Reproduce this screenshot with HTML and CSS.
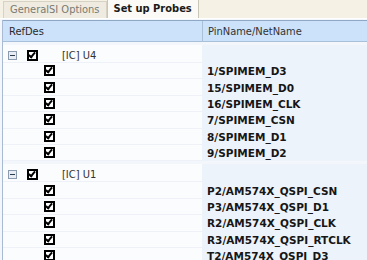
FILE: index.html
```html
<!DOCTYPE html>
<html lang="en">
<head>
  <meta charset="UTF-8">
  <title>Set up Probes</title>
  <link rel="stylesheet" href="styles.css">
</head>
<body>
  <div class="tabs">
    <div class="tab">GeneralSI Options</div>
    <div class="tab active">Set up Probes</div>
  </div>

  <div class="grid">
    <div class="head">
      <div class="cell tree">RefDes</div>
      <div class="cell pin">PinName/NetName</div>
    </div>

    <div class="group">
      <div class="row parent">
        <div class="cell tree"><span class="toggle"></span><span class="check"></span><span class="label">[IC] U4</span></div>
        <div class="cell pin"></div>
      </div>
      <div class="row child"><div class="cell tree"><span class="check"></span></div><div class="cell pin">1/SPIMEM_D3</div></div>
      <div class="row child"><div class="cell tree"><span class="check"></span></div><div class="cell pin">15/SPIMEM_D0</div></div>
      <div class="row child"><div class="cell tree"><span class="check"></span></div><div class="cell pin">16/SPIMEM_CLK</div></div>
      <div class="row child"><div class="cell tree"><span class="check"></span></div><div class="cell pin">7/SPIMEM_CSN</div></div>
      <div class="row child"><div class="cell tree"><span class="check"></span></div><div class="cell pin">8/SPIMEM_D1</div></div>
      <div class="row child"><div class="cell tree"><span class="check"></span></div><div class="cell pin">9/SPIMEM_D2</div></div>
    </div>

    <div class="group">
      <div class="row parent">
        <div class="cell tree"><span class="toggle"></span><span class="check"></span><span class="label">[IC] U1</span></div>
        <div class="cell pin"></div>
      </div>
      <div class="row child"><div class="cell tree"><span class="check"></span></div><div class="cell pin">P2/AM574X_QSPI_CSN</div></div>
      <div class="row child"><div class="cell tree"><span class="check"></span></div><div class="cell pin">P3/AM574X_QSPI_D1</div></div>
      <div class="row child"><div class="cell tree"><span class="check"></span></div><div class="cell pin">R2/AM574X_QSPI_CLK</div></div>
      <div class="row child"><div class="cell tree"><span class="check"></span></div><div class="cell pin">R3/AM574X_QSPI_RTCLK</div></div>
      <div class="row child"><div class="cell tree"><span class="check"></span></div><div class="cell pin">T2/AM574X_QSPI_D3</div></div>
    </div>
  </div>
</body>
</html>
```

FILE: styles.css
```css
body {
  margin: 0;
  width: 367px;
  height: 260px;
  overflow: hidden;
  font-family: "DejaVu Sans Condensed", "DejaVu Sans", sans-serif;
  font-size: 11px;
  color: #2a2a2a;
  background-color: #f3f7fc;
}
.tabs {
  display: flex;
  align-items: flex-end;
  height: 18px;
  padding-left: 3px;
  background-color: #f5f1e5;
  border-bottom: 1px solid #ffffff;
}
.tab {
  height: 16px;
  line-height: 16px;
  padding: 0 6px;
  color: #7a7a72;
  background-color: #efebe0;
  border: 1px solid #d6d2c4;
  border-bottom: none;
}
.tab.active {
  height: 18px;
  line-height: 18px;
  color: #1a1a1a;
  font-weight: bold;
  background-color: #fbfaf6;
  border-color: #c9c5b7;
}
.grid {
  border-left: 1px solid #a9bbd2;
  margin-left: 2px;
}
.head {
  display: flex;
  height: 20px;
  margin-top: 1px;
  background-color: #cbe2fa;
  border-top: 1px solid #8fa8c4;
  border-bottom: 1px solid #a9c0da;
}
.cell {
  display: flex;
  align-items: center;
}
.cell.tree {
  width: 199px;
  flex: none;
}
.cell.pin {
  flex: 1;
  padding-left: 5px;
}
.head .cell.tree {
  padding-left: 6px;
  box-sizing: border-box;
}
.head .cell.pin {
  border-left: 1px solid #a9c0da;
  color: #333;
}
.group {
  margin-top: 3px;
}
.row {
  display: flex;
  height: 16.4px;
}
.row.parent {
  height: 18px;
}
.row.parent .cell.tree {
  padding-top: 4px;
}
.row .cell.tree {
  background-color: #fbfcfe;
  border-bottom: 1px solid #eef2f8;
  box-sizing: border-box;
}
.row .cell.pin {
  background-color: #edf3fb;
  font-family: "DejaVu Sans", sans-serif;
  font-weight: bold;
  font-size: 10.5px;
  color: #161616;
}
.toggle {
  position: relative;
  width: 7px;
  height: 7px;
  margin-left: 5px;
  border: 1px solid #8a9bb0;
  background-color: #e8edf3;
}
.toggle::after {
  content: "";
  position: absolute;
  left: 1px;
  top: 3px;
  width: 5px;
  height: 1px;
  background-color: #2d3b4d;
}
.check {
  position: relative;
  width: 7px;
  height: 7px;
  border: 2px solid #000;
  background-color: #fff;
}
.parent .check {
  margin-left: 10px;
}
.child .check {
  margin-left: 41px;
}
.check::after {
  content: "";
  position: absolute;
  left: 1px;
  top: -1px;
  width: 2px;
  height: 5px;
  border: solid #000;
  border-width: 0 2px 2px 0;
  transform: rotate(40deg);
}
.label {
  margin-left: 24px;
  color: #333;
}
```
